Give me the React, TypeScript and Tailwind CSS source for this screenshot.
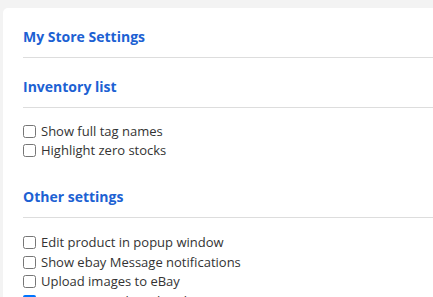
export default function App() {
  const inventory = ['Show full tag names', 'Highlight zero stocks'];
  const other = [
    { label: 'Edit product in popup window', checked: false },
    { label: 'Show ebay Message notifications', checked: false },
    { label: 'Upload images to eBay', checked: false },
    { label: 'Use eBay catalog when listing', checked: true },
  ];

  return (
    <div className="h-[297px] overflow-hidden bg-[#f3f3f3] pt-[8px] pl-[3px] font-['Open_Sans',sans-serif]">
      <div className="h-[400px] rounded-tl-[5px] bg-white pl-[20px] pt-[19px]">
        <h2 className="border-b border-[#dddddd] pb-[10px] text-[14px] font-bold leading-[20px] text-[#1c61d3]">
          My Store Settings
        </h2>

        <h2 className="mt-[19px] border-b border-[#dddddd] pb-[10px] text-[14px] font-bold leading-[20px] text-[#1c61d3]">
          Inventory list
        </h2>
        <div className="mt-[14px] flex flex-col">
          {inventory.map((item) => (
            <label key={item} className="flex h-[19px] items-center gap-[5px] text-[13px] text-[#333333]">
              <input type="checkbox" className="m-0 h-[13px] w-[13px]" />
              {item}
            </label>
          ))}
        </div>

        <h2 className="mt-[27px] border-b border-[#dddddd] pb-[10px] text-[14px] font-bold leading-[20px] text-[#1c61d3]">
          Other settings
        </h2>
        <div className="mt-[15px] flex flex-col">
          {other.map((item) => (
            <label key={item.label} className="flex h-[19.5px] items-center gap-[5px] text-[13px] text-[#333333]">
              <input type="checkbox" defaultChecked={item.checked} className="m-0 h-[13px] w-[13px]" />
              {item.label}
            </label>
          ))}
        </div>
      </div>
    </div>
  );
}
